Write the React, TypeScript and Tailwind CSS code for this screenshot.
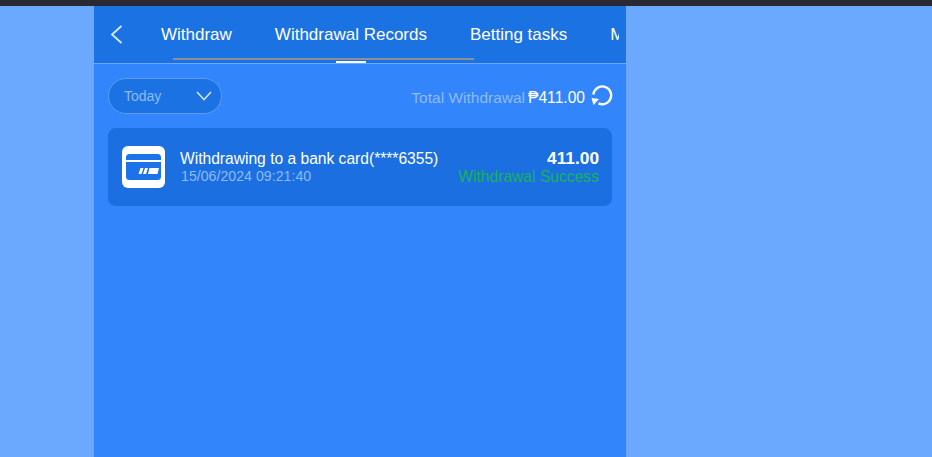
import React from 'react';

const tabs = ['Withdraw', 'Withdrawal Records', 'Betting tasks', 'My Reward'];

const CardIcon = () => (
  <svg width="43" height="42" viewBox="0 0 43 42">
    <rect width="43" height="42" rx="6" fill="#ffffff" />
    <rect x="4" y="8" width="35" height="26" rx="3.5" fill="#1b72e9" />
    <rect x="4" y="14" width="35" height="2" fill="#ffffff" />
    <path d="M18.500 22h3l-2 6h-3zM23 22h3l-2 6h-3zM27.500 22h9.500l-1.500 6h-9.500z" fill="#ffffff" />
  </svg>
);

const RefreshIcon = () => (
  <svg width="24" height="24" viewBox="0 0 24 24" fill="none">
    <path d="M3.400 10.500A8.900 8.900 0 1 1 8.500 19.400" stroke="#ffffff" strokeWidth="2.400" />
    <path d="M1.500 14l7.500 1-5.500 6z" fill="#ffffff" />
  </svg>
);

const App: React.FC = () => {
  return (
    <div className="h-[457px] w-[932px] overflow-hidden flex flex-col bg-[#6aa9ff] font-['Liberation_Sans',Arial,sans-serif]">
      <div className="h-[6px] shrink-0 bg-[#2a2830]" />
      <div className="flex-1 ml-[94px] w-[532px] bg-[#3385fb] flex flex-col">
        <div className="relative h-[58px] shrink-0 bg-[#1b72e2] border-b border-[#6aa9ff] flex items-start overflow-hidden">
          <div className="w-[67px] shrink-0 h-[57px] pl-[16px] pt-[19px]">
            <svg width="13" height="19" viewBox="0 0 13 19" fill="none">
              <path d="M11.500 1L2 9.500l9.500 8.500" stroke="#dbe9ff" strokeWidth="1.800" />
            </svg>
          </div>
          <div className="flex gap-[43px] w-[458px] overflow-hidden pt-[19px]">
            {tabs.map((t) => (
              <span key={t} className="text-white text-[17px] leading-5 whitespace-nowrap">
                {t}
              </span>
            ))}
          </div>
          <div className="absolute left-[79px] top-[52px] w-[301px] h-[2px] bg-[#8a8f98]" />
          <div className="absolute left-[242px] top-[55px] w-[30px] h-[2px] bg-white" />
        </div>

        <div className="px-[14px]">
          <div className="mt-[14px] flex items-center justify-between">
            <div className="h-[36px] w-[114px] rounded-full bg-[#1b72e2] border border-[#5b9df5] pl-[15px] pr-[9px] flex items-center justify-between">
              <span className="text-[14px] text-[#8dbbf8]">Today</span>
              <svg width="16" height="10" viewBox="0 0 16 10" fill="none">
                <path d="M1 1l7 7.500 7-7.500" stroke="#cfe2ff" strokeWidth="1.600" />
              </svg>
            </div>
            <div className="flex items-center">
              <span className="mt-[4px] text-[15.5px] text-[#8dbbf8]">Total Withdrawal</span>
              <span className="mt-[4px] ml-[3px] text-[15.6px] text-white">₱411.00</span>
              <span className="ml-[5px] mr-[-2px]">
                <RefreshIcon />
              </span>
            </div>
          </div>

          <div className="mt-[14px] h-[78px] rounded-[8px] bg-[#1b6fe0] pl-[14px] pr-[13px] flex items-center">
            <CardIcon />
            <div className="ml-[15px] flex-1 min-w-0">
              <div className="text-[15.6px] leading-[18px] text-white">Withdrawing to a bank card(****6355)</div>
              <div className="text-[14.200px] leading-[16px] pl-px text-[#8dbbf8]">15/06/2024 09:21:40</div>
            </div>
            <div className="text-right">
              <div className="text-[17.300px] leading-[18px] font-bold text-white mb-px">411.00</div>
              <div className="text-[15.650px] leading-[18px] text-[#19b35c]">Withdrawal Success</div>
            </div>
          </div>
        </div>
      </div>
    </div>
  );
};

export default App;
